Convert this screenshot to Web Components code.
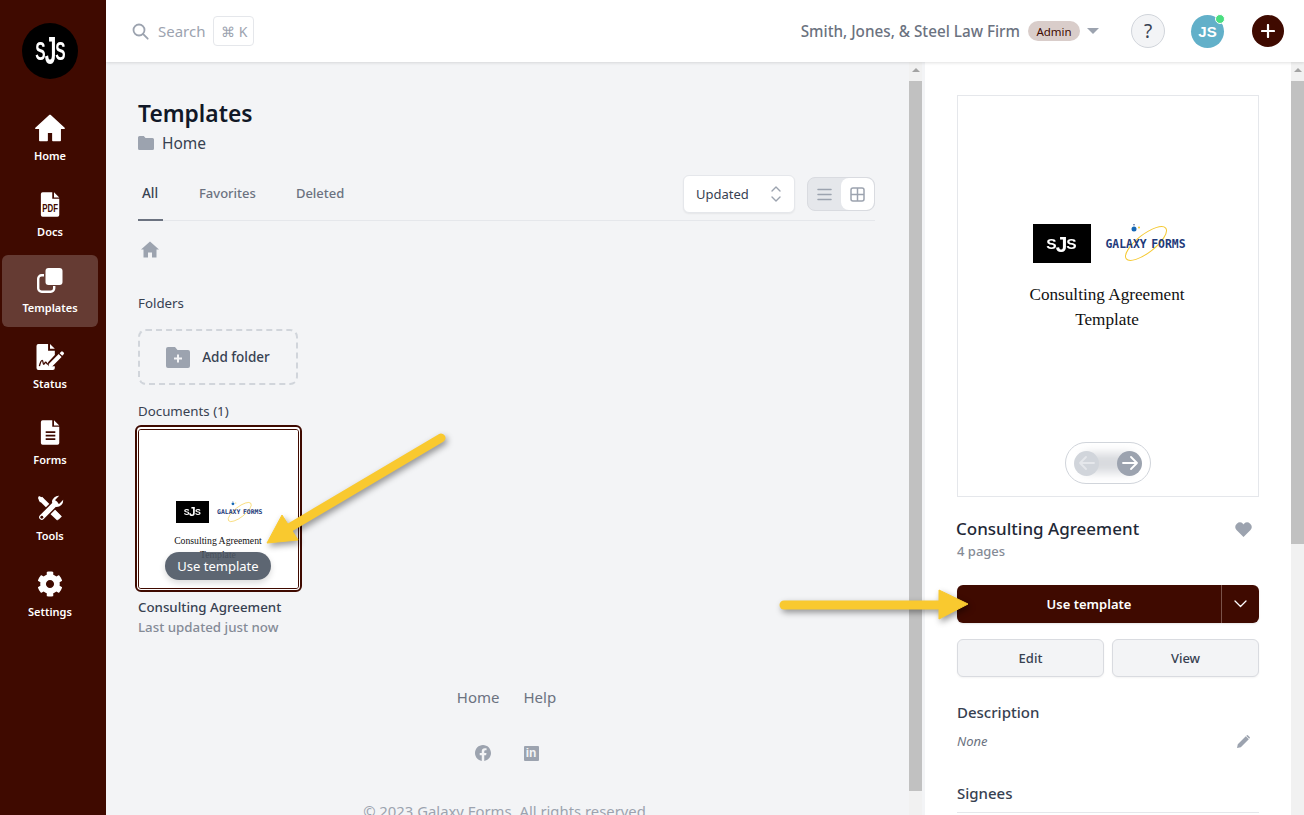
<!DOCTYPE html>
<html lang="en">
<head>
<meta charset="utf-8">
<title>Templates</title>
<style>
  html, body { margin: 0; height: 815px; overflow: hidden; }
  body {
    font-family: "Noto Sans", "Open Sans", sans-serif;
    display: grid;
    grid-template-columns: 106px 1fr;
    background: #f3f4f6;
    position: relative;
  }
  .right { display: flex; flex-direction: column; min-width: 0; height: 815px; }
  .content { display: flex; flex: 1; min-height: 0; }
</style>
</head>
<body>
<side-nav>
  <nav-item label="Home"><svg viewBox="0 0 24 24" width="32" height="32" fill="#fff" stroke="#fff" stroke-width="1.2" stroke-linejoin="round"><path d="M12 2.6 1.4 12.2h3v9.2h5.4v-6.2h4.4v6.2h5.4v-9.2h3z"/></svg></nav-item>
  <nav-item label="Docs"><svg viewBox="0 0 24 30" width="21" height="27"><path fill="#fff" d="M3 1h11v7.500h8V27a2 2 0 0 1-2 2H3a2 2 0 0 1-2-2V3a2 2 0 0 1 2-2z"/><path fill="#fff" d="M16 1l6 6h-6z"/><text transform="translate(11.500 24) scale(1 1.400)" font-family="Liberation Sans" font-weight="700" font-size="9" text-anchor="middle" fill="#3f0a00">PDF</text></svg></nav-item>
  <nav-item label="Templates" active><svg viewBox="0 0 26 26" width="26" height="26"><rect x="1.200" y="8.200" width="16" height="16.500" rx="3.500" fill="none" stroke="#fff" stroke-width="2.400"/><rect x="7" y="0.500" width="18.500" height="18.500" rx="3.500" fill="#653b33"/><rect x="8.500" y="1" width="17" height="17" rx="3" fill="#fff"/></svg></nav-item>
  <nav-item label="Status"><svg viewBox="0 0 30 28" width="30" height="27"><path fill="#fff" d="M3 1h10v7h7v4.500L13 20v4h7v2a2 2 0 0 1-2 2H3a2 2 0 0 1-2-2V3a2 2 0 0 1 2-2z"/><path fill="#fff" d="M15 1l5 5h-5z"/><path fill="none" stroke="#3f0a00" stroke-width="1.400" d="M4 24c1-4 2-6 3-6s.5 4 1.500 4 1-2 2-2 1 2 2.500 2"/><path fill="#fff" d="M14 21.500l10-10 3 3-10 10-4 1zM25 10.500l1.500-1.500a1.300 1.300 0 0 1 1.800 0l.9.9a1.300 1.300 0 0 1 0 1.800L27.700 13.200z"/></svg></nav-item>
  <nav-item label="Forms"><svg viewBox="0 0 24 30" width="21" height="27"><path fill="#fff" d="M3 1h11v7.500h8V27a2 2 0 0 1-2 2H3a2 2 0 0 1-2-2V3a2 2 0 0 1 2-2z"/><path fill="#fff" d="M16 1l6 6h-6z"/><path stroke="#3f0a00" stroke-width="2" d="M6.500 14.500h11M6.500 18.500h11M6.500 22.500h11"/></svg></nav-item>
  <nav-item label="Tools"><svg viewBox="0 0 28 28" width="27" height="27"><path d="M3.500 3.500 24 24" stroke="#fff" stroke-width="5" stroke-linecap="butt"/><path d="M2 1l4.500 2 .5 4-4 .5L1 3z" fill="#fff"/><path d="M17 14l7.500 7.500-3.500 5L13 19z" fill="#fff"/><path d="M5 23 19 9" stroke="#3f0a00" stroke-width="8.500"/><path d="M5 23 19 9" stroke="#fff" stroke-width="5.500" stroke-linecap="round"/><path fill="#fff" d="M15.500 7.500A7 7 0 0 1 23 .8l-4 4 .5 3.700 3.700.5 4-4A7 7 0 0 1 20 12.500z"/><circle cx="5" cy="23" r="1.500" fill="#3f0a00"/></svg></nav-item>
  <nav-item label="Settings"><svg viewBox="0 0 512 512" width="26" height="26" fill="#fff"><path d="M487.400 315.700l-42.600-24.600c4.300-23.200 4.300-47 0-70.200l42.600-24.600c4.900-2.800 7.100-8.600 5.500-14-11.100-35.600-30-67.800-54.700-94.600-3.800-4.100-10-5.100-14.800-2.300L380.800 110c-17.900-15.400-38.500-27.300-60.800-35.100V25.800c0-5.600-3.900-10.500-9.400-11.700-36.700-8.200-74.300-7.800-109.200 0-5.500 1.200-9.400 6.100-9.400 11.700V75c-22.200 7.900-42.800 19.800-60.800 35.100L88.700 85.500c-4.900-2.800-11-1.900-14.800 2.300-24.700 26.700-43.600 58.900-54.700 94.600-1.700 5.400.6 11.200 5.500 14L67.300 221c-4.300 23.200-4.300 47 0 70.200l-42.600 24.600c-4.900 2.800-7.100 8.600-5.500 14 11.100 35.600 30 67.800 54.700 94.600 3.800 4.100 10 5.100 14.800 2.300l42.600-24.600c17.900 15.400 38.500 27.300 60.800 35.100v49.200c0 5.600 3.900 10.500 9.400 11.700 36.700 8.200 74.300 7.800 109.200 0 5.500-1.200 9.400-6.100 9.400-11.700v-49.200c22.200-7.900 42.800-19.800 60.800-35.100l42.600 24.600c4.900 2.800 11 1.900 14.800-2.300 24.700-26.700 43.600-58.900 54.700-94.600 1.500-5.500-.7-11.300-5.600-14.100zM256 336c-44.100 0-80-35.900-80-80s35.900-80 80-80 80 35.900 80 80-35.900 80-80 80z"/></svg></nav-item>
</side-nav>
<div class="right">
  <top-bar></top-bar>
  <div class="content">
    <template-list></template-list>
    <fake-scroll thumb-top="9" thumb-height="710"></fake-scroll>
    <detail-panel></detail-panel>
    <fake-scroll thumb-top="9" thumb-height="463"></fake-scroll>
  </div>
</div>
<call-arrows></call-arrows>

<script>
function make(name, html, setup) {
  const template = document.createElement("template");
  template.innerHTML = html;
  customElements.define(name, class extends HTMLElement {
    connectedCallback() {
      if (!this.shadowRoot) {
        this.attachShadow({ mode: "open" }).appendChild(template.content.cloneNode(true));
        if (setup) setup(this, this.shadowRoot);
      }
    }
  });
}

// 30x30 monogram, stretched by --sx / --sy where the document logo needs it
make("brand-mark", `
  <style>
    :host { display: flex; align-items: center; justify-content: center; flex: none; width: 30px; height: 30px; color: #fff; font-family: "Liberation Sans", sans-serif; font-weight: 700; transform: scale(var(--sx, 1), var(--sy, 1)); }
    span { display: flex; justify-content: center; line-height: 1; }
    .s { width: 11px; font-size: 25px; transform: scaleX(.62); }
    .j { width: 9px; font-size: 38px; transform: scaleX(.55); }
  </style>
  <span class="s">S</span><span class="j">J</span><span class="s">S</span>`);

make("side-nav", `
  <style>
    :host { display: flex; flex-direction: column; background: #3f0a00; height: 815px; padding-left: 2px; box-sizing: border-box; }
    .logo { width: 56px; height: 56px; border-radius: 50%; background: #000; margin: 23px 0 24px 20px; display: flex; align-items: center; justify-content: center; }
    .items { display: flex; flex-direction: column; gap: 4px; width: 96px; }
  </style>
  <div class="logo"><brand-mark></brand-mark></div>
  <div class="items"><slot></slot></div>`);

make("nav-item", `
  <style>
    :host { display: flex; flex-direction: column; align-items: center; height: 72px; border-radius: 6px; color: #fff; font-size: 11px; font-weight: 600; box-sizing: border-box; padding-top: 8px; }
    :host([active]) { background: #653b33; }
    .icon { height: 34px; display: flex; align-items: center; justify-content: center; }
    .label { margin-top: 3px; line-height: 16px; }
    ::slotted(svg) { display: block; }
  </style>
  <div class="icon"><slot></slot></div>
  <div class="label"></div>`, (el, root) => {
    root.querySelector(".label").textContent = el.getAttribute("label");
  });

make("top-bar", `
  <style>
    :host { display: flex; align-items: center; height: 62px; flex: none; background: #fff; box-shadow: 0 1px 3px rgba(0,0,0,.12); position: relative; z-index: 2; padding: 0 20px 0 26px; box-sizing: border-box; }
    .search { color: #9ca3af; font-size: 15px; margin: 0 8px 0 9px; }
    kbd { font: inherit; font-size: 14px; color: #9ca3af; width: 41px; height: 30px; box-sizing: border-box; border: 1px solid #e5e7eb; border-radius: 4px; display: flex; align-items: center; justify-content: center; gap: 4px; }
    .firm { margin-left: auto; color: #6b7280; font-size: 15.250px; font-weight: 500; }
    .badge { margin-left: 8px; background: #d9cdca; color: #3f0a00; font-size: 11.500px; height: 20px; width: 52px; border-radius: 10px; display: flex; align-items: center; justify-content: center; }
    .caret { margin: 0 32px 0 7px; width: 0; height: 0; border: 6px solid transparent; border-top: 6px solid #9ca3af; border-bottom: 0; }
    .help { width: 34px; height: 34px; box-sizing: border-box; border-radius: 50%; background: #f3f4f6; border: 1px solid #d1d5db; color: #374151; font-size: 19px; display: flex; align-items: center; justify-content: center; }
    .avatar { position: relative; margin-left: 26px; width: 33px; height: 33px; border-radius: 50%; background: #62b0c9; color: #fff; font: 700 15px "Liberation Sans", sans-serif; display: flex; align-items: center; justify-content: center; }
    .avatar i { position: absolute; right: -1px; top: -1px; width: 8px; height: 8px; border-radius: 50%; background: #4ade80; border: 1px solid #fff; }
    .plus { margin-left: 28px; width: 32px; height: 32px; border-radius: 50%; background: #3f0a00; display: flex; align-items: center; justify-content: center; }
  </style>
  <svg width="17" height="17" viewBox="0 0 17 17" fill="none" stroke="#9ca3af" stroke-width="1.800" stroke-linecap="round"><circle cx="7" cy="7" r="5.500"/><path d="M11.200 11.200 15.700 15.700"/></svg>
  <span class="search">Search</span>
  <kbd><span>⌘</span><span>K</span></kbd>
  <span class="firm">Smith, Jones, &amp; Steel Law Firm</span>
  <span class="badge">Admin</span>
  <span class="caret"></span>
  <span class="help">?</span>
  <span class="avatar">JS<i></i></span>
  <span class="plus"><svg width="14" height="14" viewBox="0 0 14 14" stroke="#fff" stroke-width="2.200" stroke-linecap="round"><path d="M7 1v12M1 7h12"/></svg></span>`);

make("fake-scroll", `
  <style>
    :host { display: flex; flex-direction: column; width: 13px; flex: none; background: #f1f1f1; overflow: hidden; }
    .up { width: 0; height: 0; margin: 6px auto 0; border: 4px solid transparent; border-bottom: 4px solid #a3a3a3; border-top: 0; }
    .thumb { background: #c1c1c1; flex: none; }
  </style>
  <div class="up"></div>
  <div class="thumb"></div>`, (el, root) => {
    const thumb = root.querySelector(".thumb");
    thumb.style.marginTop = el.getAttribute("thumb-top") + "px";
    thumb.style.height = el.getAttribute("thumb-height") + "px";
  });

make("doc-preview", `
  <style>
    :host { display: flex; flex-direction: column; align-items: center; background: #fff; overflow: hidden; box-sizing: border-box; padding-top: calc(var(--s) * 128px); }
    .logos { display: flex; align-items: center; gap: calc(var(--s) * 13px); margin-left: calc(var(--s) * 4px); }
    .sjs { width: calc(var(--s) * 58px); height: calc(var(--s) * 39px); background: #000; display: flex; align-items: center; justify-content: center; --sx: var(--s); --sy: calc(var(--s) * .6); }
    .galaxy { position: relative; width: calc(var(--s) * 84px); height: calc(var(--s) * 39px); display: flex; align-items: center; justify-content: center; }
    .galaxy b { font: 700 calc(var(--s) * 11.400px) "DejaVu Sans Mono", monospace; word-spacing: -.2em; color: #1e3a7a; white-space: nowrap; position: relative; }
    .galaxy svg { position: absolute; inset: 0; width: 100%; height: 100%; }
    .doc-title { margin: calc(var(--s) * 19px) calc(var(--s) * 2px) 0 0; font: calc(var(--s) * 17.200px)/calc(var(--s) * 25px) "Liberation Serif", serif; color: #111; text-align: center; white-space: nowrap; }
  </style>
  <div class="logos">
    <div class="sjs"><brand-mark></brand-mark></div>
    <div class="galaxy"><svg viewBox="0 0 84 39" fill="none"><ellipse cx="42" cy="19.500" rx="25" ry="9" transform="rotate(-38 42 19.500)" stroke="#f5c932" stroke-width="1"/><circle cx="30" cy="5" r="2.500" fill="#1668b5"/><circle cx="35" cy="3.500" r="1" fill="#f5c932"/><circle cx="30" cy="0.800" r=".7" fill="#1e3a7a"/></svg><b>GALAXY FORMS</b></div>
  </div>
  <div class="doc-title">Consulting Agreement<br>Template</div>`);

make("template-list", `
  <style>
    :host { display: block; flex: 1; min-width: 0; padding: 0 34px 0 32px; overflow: hidden; color: #374151; }
    h1 { margin: 37px 0 0; font-size: 22.800px; line-height: 30px; font-weight: 600; color: #111827; }
    .crumb { display: flex; align-items: center; gap: 8px; font-size: 15.500px; line-height: 20px; margin-top: 4px; }
    .bar { display: flex; align-items: flex-end; margin-top: 17px; border-bottom: 1px solid #e5e7eb; height: 50px; }
    .tab { font-size: 13px; font-weight: 500; color: #6b7280; height: 100%; box-sizing: border-box; padding: 13px 4px 0; line-height: 20px; margin-right: 32px; }
    .tab.on { color: #374151; border-bottom: 2px solid #6b7280; margin-bottom: -1px; height: calc(100% + 1px); margin-right: 32px; width: 25px; font-size: 13.500px; }
    .bar .sort { margin: 0 12px 7px auto; width: 112px; height: 38px; box-sizing: border-box; background: #fff; border: 1px solid #e5e7eb; border-radius: 6px; box-shadow: 0 1px 2px rgba(0,0,0,.06); font-size: 13px; color: #374151; display: flex; align-items: center; justify-content: space-between; padding: 0 13px 0 12px; }
    .views { display: flex; margin-bottom: 9px; width: 68px; height: 34px; box-sizing: border-box; border: 1px solid #d9dbe0; border-radius: 8px; background: #e5e7eb; overflow: hidden; }
    .views span { flex: 1; display: flex; align-items: center; justify-content: center; }
    .views span + span { background: #fff; border-radius: 8px; }
    .house { margin: 20px 0 0 3px; display: block; }
    .label { font-size: 13.300px; line-height: 18px; color: #374151; }
    .add { margin-top: 17px; width: 160px; height: 56px; box-sizing: border-box; border: 2px dashed #d1d5db; border-radius: 8px; display: flex; align-items: center; justify-content: center; gap: 12px; font-size: 13.500px; font-weight: 500; }
    .card { position: relative; margin: 5px 0 0 -3px; width: 167px; height: 167px; box-sizing: border-box; border: 2px solid #3f0a00; border-radius: 6px; padding: 2px 1px 1px; background: #fff; }
    .card .inner { height: 100%; box-sizing: border-box; border: 1px solid #3f0a00; border-radius: 3px; overflow: hidden; }
    doc-preview { --s: .565; height: 100%; padding-top: 71px; }
    .pill { position: absolute; left: 28px; top: 125px; width: 106px; height: 28px; border-radius: 14px; background: rgba(75,85,99,.9); color: #fff; font-size: 13px; display: flex; align-items: center; justify-content: center; box-shadow: 0 3px 6px rgba(0,0,0,.15); }
    .name { font-size: 13.300px; line-height: 20px; margin-top: 5px; font-weight: 500; }
    .when { font-size: 13.300px; line-height: 20px; font-weight: 500; color: #858b96; }
    footer { display: flex; flex-direction: column; align-items: center; margin-top: 50px; width: 737px; }
    .links { display: flex; gap: 24px; font-size: 15px; line-height: 20px; color: #6b7280; }
    .social { display: flex; gap: 33px; margin-top: 38px; height: 16px; align-items: center; }
    .in { width: 15px; height: 15px; background: #9ca3af; color: #f3f4f6; font: 700 12px/15px "Liberation Sans", sans-serif; text-align: center; border-radius: 1px; }
    .copy { margin-top: 40px; font-size: 14.850px; line-height: 20px; color: #9ca3af; white-space: nowrap; }
  </style>
  <h1>Templates</h1>
  <div class="crumb">
    <svg width="16" height="14" viewBox="0 0 16 14" fill="#9ca3af"><path d="M1.500 0h4.300l1.700 2h7a1.500 1.500 0 0 1 1.500 1.500v9A1.500 1.500 0 0 1 14.500 14h-13A1.500 1.500 0 0 1 0 12.500v-11A1.500 1.500 0 0 1 1.500 0z"/></svg>
    <span>Home</span>
  </div>
  <div class="bar">
    <span class="tab on">All</span><span class="tab">Favorites</span><span class="tab">Deleted</span>
    <div class="sort">Updated
      <svg width="10" height="18" viewBox="0 0 10 18" fill="none" stroke="#9ca3af" stroke-width="1.400" stroke-linecap="round" stroke-linejoin="round"><path d="M1 6l4-4 4 4M1 12l4 4 4-4"/></svg>
    </div>
    <div class="views">
      <span><svg width="15" height="13" viewBox="0 0 15 13" stroke="#9ca3af" stroke-width="1.500" stroke-linecap="round"><path d="M1 1.500h13M1 6.500h13M1 11.500h13"/></svg></span>
      <span><svg width="15" height="15" viewBox="0 0 15 15" fill="none" stroke="#9ca3af" stroke-width="1.500"><rect x="1" y="1" width="13" height="13" rx="2"/><path d="M7.500 1v13M1 7.500h13"/></svg></span>
    </div>
  </div>
  <svg class="house" width="18" height="17" viewBox="0 0 18 17" fill="#9ca3af"><path d="M9 .5 0 8.500h2.500V16.500h4.500v-5h4v5h4.500V8.500H18z"/></svg>
  <div class="label" style="margin-top:36px">Folders</div>
  <div class="add">
    <svg width="24" height="21" viewBox="0 0 24 21"><path fill="#9ca3af" d="M2 0h7l2.500 3H22a2 2 0 0 1 2 2v14a2 2 0 0 1-2 2H2a2 2 0 0 1-2-2V2a2 2 0 0 1 2-2z"/><path stroke="#f3f4f6" stroke-width="2" d="M12 7.500v8M8 11.500h8"/></svg>
    <span>Add folder</span>
  </div>
  <div class="label" style="margin-top:17px">Documents (1)</div>
  <div class="card">
    <div class="inner"><doc-preview></doc-preview></div>
    <div class="pill">Use template</div>
  </div>
  <div class="name">Consulting Agreement</div>
  <div class="when">Last updated just now</div>
  <footer>
    <div class="links"><span>Home</span><span>Help</span></div>
    <div class="social">
      <svg width="16" height="16" viewBox="0 0 24 24" fill="#9ca3af"><path d="M24 12.070C24 5.400 18.630 0 12 0S0 5.400 0 12.070c0 6.030 4.390 11.020 10.130 11.930v-8.440H7.080v-3.490h3.050V9.410c0-3.020 1.790-4.690 4.530-4.690 1.310 0 2.680.23 2.680.23v2.960h-1.510c-1.490 0-1.950.93-1.950 1.880v2.260h3.330l-.53 3.490h-2.800V24C19.610 23.090 24 18.100 24 12.070z"/></svg>
      <div class="in">in</div>
    </div>
    <div class="copy">© 2023 Galaxy Forms. All rights reserved.</div>
  </footer>`);

make("detail-panel", `
  <style>
    :host { display: block; margin-left: 3px; width: 366px; flex: none; box-sizing: border-box; background: #fff; padding: 33px 32px 0; overflow: hidden; color: #374151; }
    .sheet { position: relative; height: 402px; box-sizing: border-box; border: 1px solid #e5e7eb; }
    doc-preview { --s: 1; height: 100%; }
    .pager { position: absolute; left: 107px; top: 346px; width: 86px; height: 42px; box-sizing: border-box; border: 1px solid #d1d5db; border-radius: 21px; background: #fff; display: flex; align-items: center; justify-content: space-between; padding: 0 8px; }
    .pager::before { content: ""; position: absolute; left: 18px; right: 18px; top: 10px; bottom: 10px; background: #d8dade; filter: blur(5px); }
    .pager span { position: relative; width: 25px; height: 25px; border-radius: 50%; display: flex; align-items: center; justify-content: center; background: #9ca3af; }
    .pager span.off { background: #d1d5db; }
    .head { display: flex; justify-content: space-between; align-items: center; margin-top: 20px; }
    .title { font-size: 17px; line-height: 24px; font-weight: 500; color: #1f2937; margin-left: -1px; }
    .heart { margin-right: 7px; }
    .pages { font-size: 13px; line-height: 20px; color: #858b96; font-weight: 500; }
    .use { margin-top: 24px; height: 38px; display: flex; background: #3f0a00; border-radius: 6px; color: #fff; font-size: 13px; font-weight: 600; box-shadow: 0 1px 2px rgba(0,0,0,.1); }
    .use .main { flex: 1; display: flex; align-items: center; justify-content: center; }
    .use .more { width: 37px; border-left: 1px solid #7a5249; display: flex; align-items: center; justify-content: center; }
    .pair { display: grid; grid-template-columns: 1fr 1fr; gap: 8px; margin-top: 16px; }
    .pair div { height: 38px; box-sizing: border-box; border: 1px solid #d9dbe0; border-radius: 6px; background: #f3f4f6; display: flex; align-items: center; justify-content: center; font-size: 13px; font-weight: 500; box-shadow: 0 1px 2px rgba(0,0,0,.05); }
    h2 { margin: 0; font-size: 15px; line-height: 22px; font-weight: 500; color: #374151; }
    .none { display: flex; justify-content: space-between; align-items: center; font-size: 13px; font-style: italic; color: #6b7280; line-height: 20px; margin-top: 8px; padding-right: 9px; }
    .rule { border-bottom: 1px solid #e5e7eb; padding-bottom: 8px; }
  </style>
  <div class="sheet">
    <doc-preview></doc-preview>
    <div class="pager">
      <span class="off"><svg width="16" height="14" viewBox="0 0 16 14" fill="none" stroke="#e5e7eb" stroke-width="1.800" stroke-linecap="round" stroke-linejoin="round"><path d="M15 7H1M7 1 1 7l6 6"/></svg></span>
      <span><svg width="16" height="14" viewBox="0 0 16 14" fill="none" stroke="#fff" stroke-width="1.800" stroke-linecap="round" stroke-linejoin="round"><path d="M1 7h14M9 1l6 6-6 6"/></svg></span>
    </div>
  </div>
  <div class="head">
    <span class="title">Consulting Agreement</span>
    <svg class="heart" width="17" height="15" viewBox="0 0 17 15" fill="#9ca3af"><path d="M8.500 15 1.500 8A4.500 4.500 0 0 1 8 1.800l.5.600.5-.6A4.500 4.500 0 0 1 15.500 8z"/></svg>
  </div>
  <div class="pages">4 pages</div>
  <div class="use">
    <div class="main">Use template</div>
    <div class="more"><svg width="13" height="8" viewBox="0 0 13 8" fill="none" stroke="#fff" stroke-width="1.300" stroke-linecap="round" stroke-linejoin="round"><path d="M1 1l5.500 5.500L12 1"/></svg></div>
  </div>
  <div class="pair"><div>Edit</div><div>View</div></div>
  <h2 style="margin-top:24px">Description</h2>
  <div class="none"><span>None</span>
    <svg width="13" height="13" viewBox="0 0 13 13" fill="#9ca3af"><path d="M0 13l.8-3.800L8.800 1.200l3 3-8 8zM9.700.4a1 1 0 0 1 1.400 0l1.500 1.500a1 1 0 0 1 0 1.400l-.4.400-3-3z"/></svg>
  </div>
  <h2 class="rule" style="margin-top:31px">Signees</h2>`);

make("call-arrows", `
  <style>
    :host { position: absolute; left: 0; top: 0; width: 1304px; height: 815px; pointer-events: none; z-index: 5; }
    svg { display: block; }
    g { filter: drop-shadow(2px 3px 3px rgba(0,0,0,.4)); }
  </style>
  <svg width="1304" height="815" viewBox="0 0 1304 815">
    <g fill="#f9c92f" stroke="#f9c92f">
      <path d="M441 438 289 528" stroke-width="9" stroke-linecap="round" fill="none"/>
      <path d="M267 543 282 515 298 540z" stroke-width="1" stroke-linejoin="round"/>
    </g>
    <g fill="#f9c92f" stroke="#f9c92f">
      <path d="M784 605H942" stroke-width="9" stroke-linecap="round" fill="none"/>
      <path d="M939 590V619L968 604z" stroke-width="1" stroke-linejoin="round"/>
    </g>
  </svg>`);
</script>
</body>
</html>
